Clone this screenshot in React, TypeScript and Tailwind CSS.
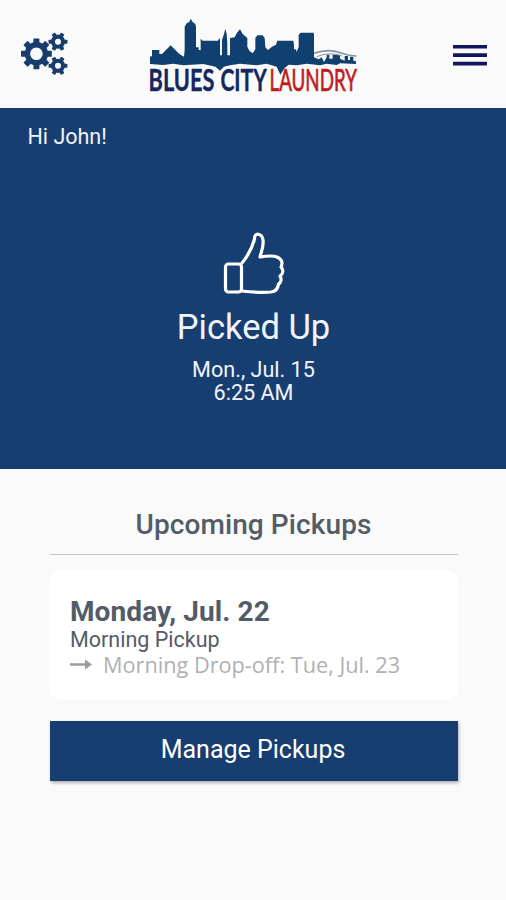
interface GearProps {
  cx: number
  cy: number
  radius: number
  teeth: number
  hole: number
  toothWidth: number
}

const NAVY = '#173c6d'

function Gear({ cx, cy, radius, teeth, hole, toothWidth }: GearProps) {
  const body = radius * 0.76
  const ring = (body + hole) / 2
  return (
    <g transform={`translate(${cx} ${cy})`}>
      <circle r={ring} fill="none" stroke={NAVY} strokeWidth={body - hole} />
      {Array.from({ length: teeth }, (_, i) => (
        <rect
          key={i}
          x={body - 1}
          y={-toothWidth / 2}
          width={radius - body + 1}
          height={toothWidth}
          rx={0.6}
          fill={NAVY}
          transform={`rotate(${(360 / teeth) * i})`}
        />
      ))}
    </g>
  )
}

function SettingsIcon() {
  return (
    <svg width="48" height="44" viewBox="20 32 48 44">
      <Gear cx={36.4} cy={53.8} radius={15.4} teeth={8} hole={6.3} toothWidth={6} />
      <Gear cx={58} cy={41.7} radius={9.4} teeth={6} hole={3} toothWidth={4} />
      <Gear cx={58} cy={65.8} radius={9.4} teeth={6} hole={3} toothWidth={4} />
    </svg>
  )
}

function MenuIcon() {
  return (
    <svg width="34" height="22" viewBox="0 0 34 22" stroke="#10175f" strokeWidth="3.6">
      <path d="M0 2.7H34M0 11.1H34M0 19.6H34" />
    </svg>
  )
}

function Logo() {
  return (
    <svg width="220" height="86" viewBox="144 16 220 86">
      <g transform="translate(140 10) scale(0.33333)">
        {/* skyline, with the tree line dripping between the words */}
        <path
          fill="#10406f"
          d="M30 162V140L36 138V120H58V132H66L92 106L118 132L132 140L134 120V50L140 40L148 36L152 26L158 36L166 42L168 50V112H176V120H182V86L188 92H234L238 84L240 90V136H246V90L252 72L256 56L260 72L262 100V136H270V84L284 82L290 70L300 58L308 72L322 84V110L328 122L338 130L346 118V84L352 76H368L374 84L376 112L384 120L396 110L408 104L412 92H460L462 104V118H468L470 126L476 110V74L482 68H520L522 72V142L536 148L545 142L552 156L560 142V134H568V146H578V134H600V146L614 152V138H624V150H630V140H640V152L648 154V162L600 160L590 165L560 161L540 166L500 161L470 166L446 164L434 174L421 194L410 170L380 161L350 166L300 161L270 166L252 170L240 182L226 170L190 162L130 166L100 161L70 165Z"
        />
        <path d="M522 130Q568 114 606 130Q626 138 650 138" fill="none" stroke="#8595a8" strokeWidth="5" />
        <path d="M530 140Q568 124 606 138" fill="none" stroke="#8595a8" strokeWidth="3" />
      </g>
      <g fontFamily="Lato, sans-serif" fontSize="30">
        <text transform="translate(148.6 91) scale(.73 1)" fill="#14285f" stroke="#14285f" strokeWidth="0.4" fontWeight="700" textLength="90" lengthAdjust="spacingAndGlyphs">BLUES</text>
        <text transform="translate(220.500 91) scale(.69 1)" fill="#14285f" stroke="#14285f" strokeWidth="0.4" fontWeight="700" textLength="67" lengthAdjust="spacingAndGlyphs">CITY</text>
        <text transform="translate(269.500 91) scale(.62 1)" fill="#c01c20" stroke="#c01c20" strokeWidth="0.7" textLength="141" lengthAdjust="spacingAndGlyphs">LAUNDRY</text>
      </g>
    </svg>
  )
}

function ThumbsUp() {
  return (
    <svg width="64" height="64" viewBox="221 231 64 64" fill="none" stroke="#fff" strokeWidth="3.2" strokeLinejoin="round" strokeLinecap="round">
      <rect x="225.500" y="264" width="16" height="28" rx="3" />
      <path d="M242 263C247 257 252 249 254.500 239C254 232 262 233 263 240C264 247 261 252 260 257C266 256 273 255.500 277 257C282 259 283 263 281 267C284 270 283 274 280 276C282 279 281 283 278.500 284C278 289 275 291.500 271 292C261 293 251 292 242 291" />
    </svg>
  )
}

export default function App() {
  return (
    <div className="min-h-[900px] w-full bg-[#fafafa] font-['Roboto',sans-serif]">
      <header className="flex h-[108px] items-start justify-between pl-5 pr-[19px]">
        <button className="mt-8">
          <SettingsIcon />
        </button>
        <div className="mt-4 ml-[-14px]">
          <Logo />
        </div>
        <button className="mt-11">
          <MenuIcon />
        </button>
      </header>

      <section className="h-[361px] bg-[#173e70] pt-[17px] text-[#f3f4fb]">
        <p className="pl-[27.500px] text-[21.500px] leading-6">Hi John!</p>
        <div className="mt-[82px] flex flex-col items-center">
          <ThumbsUp />
          <h1 className="mt-3 ml-px text-[34.500px] leading-10">Picked Up</h1>
          <p className="mt-[11px] ml-px text-center text-[21.600px] leading-[23px]">
            Mon., Jul. 15
            <br />
            6:25 AM
          </p>
        </div>
      </section>

      <main className="ml-[50px] mr-12 pt-[38px]">
        <h2 className="border-b border-[#c4c5c7] pb-[11px] pr-px text-center text-[28px] font-medium leading-9 tracking-[0.1px] text-[#535c67]">
          Upcoming Pickups
        </h2>
        <div className="mt-[15px] h-[130px] rounded-xl bg-white px-5 pt-[26px]">
          <h3 className="text-[28px] font-bold leading-8 tracking-[0.1px] text-[#535b68]">Monday, Jul. 22</h3>
          <p className="text-[21.500px] leading-6 text-[#535b68]">Morning Pickup</p>
          <p className="flex items-center whitespace-nowrap font-['Open_Sans',sans-serif] text-[21.700px] leading-[26px] text-[#aeb0b3]">
            <svg className="mr-[11px]" width="22" height="12" viewBox="0 0 22 12">
              <path d="M0 5.500H17" stroke="#999b9e" strokeWidth="2.5" />
              <path d="M15 0.500L22 5.500L15 10.500Z" fill="#999b9e" />
            </svg>
            Morning Drop-off: Tue, Jul. 23
          </p>
        </div>
        <button className="mt-[21px] h-[60px] w-full bg-[#173e70] pb-0.5 pr-0.5 text-[25px] text-white shadow-[1px_2px_3px_rgba(0,0,0,0.3)]">
          Manage Pickups
        </button>
      </main>
    </div>
  )
}
